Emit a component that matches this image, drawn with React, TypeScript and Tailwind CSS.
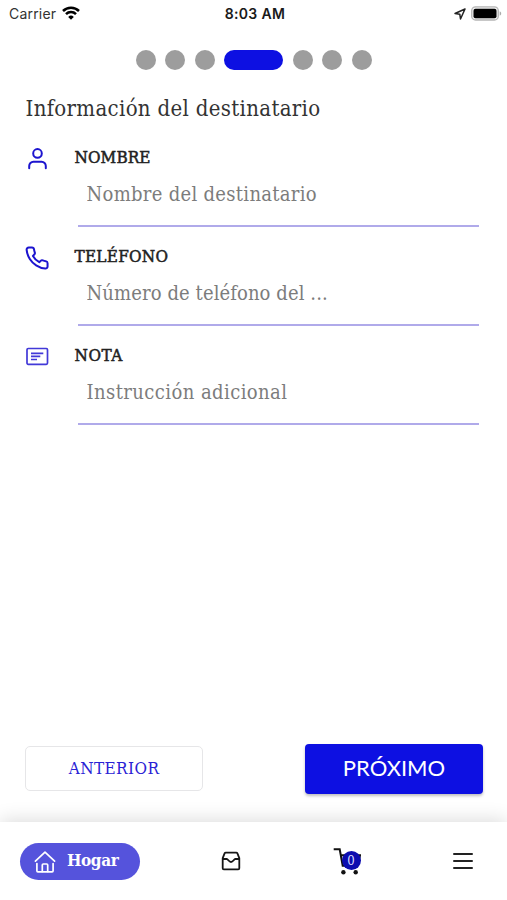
import type { ReactNode } from 'react';

type Field = {
  id: string;
  label: string;
  placeholder: string;
  labelClass: string;
  placeholderClass: string;
  icon: ReactNode;
};

const UserIcon = () => (
  <svg className="block h-6 w-6" viewBox="0 0 24 24" fill="none" stroke="#1c14cf" strokeWidth="2" strokeLinecap="round">
    <circle cx="12.5" cy="6.4" r="4.3" />
    <path d="M4.2 21.3v-2.4a4.2 4.2 0 0 1 4.2-4.2h8.2a4.2 4.2 0 0 1 4.2 4.2v2.4" />
  </svg>
);

const PhoneIcon = () => (
  <svg className="block h-6 w-6" viewBox="-.8 -.6 25 25" fill="none" stroke="#1c14cf" strokeWidth="2.1" strokeLinejoin="round">
    <path d="M22.7 17.4v3.3a2.2 2.2 0 0 1-2.4 2.2 21.8 21.8 0 0 1-9.5-3.4 21.5 21.5 0 0 1-6.6-6.6A21.8 21.8 0 0 1 .9 3.4 2.2 2.2 0 0 1 3.1 1h3.3a2.2 2.2 0 0 1 2.2 1.9c.14 1.05.4 2.08.77 3.07a2.2 2.2 0 0 1-.5 2.32l-1.4 1.4a17.6 17.6 0 0 0 6.6 6.6l1.4-1.4a2.2 2.2 0 0 1 2.32-.5c.99.37 2.02.63 3.07.77a2.2 2.2 0 0 1 1.84 2.24z" />
  </svg>
);

const NoteIcon = () => (
  <svg className="block h-6 w-6" viewBox="0 0 24 24" fill="none" stroke="#4239d8" strokeWidth="1.7">
    <rect x="2" y="3.5" width="20.5" height="15.8" rx="1.2" />
    <path d="M6 8.3h12.3M6 11.4h9.3M6 14.5h6" />
  </svg>
);

const HomeIcon = () => (
  <svg className="h-6 w-6" viewBox="0 0 24 24" fill="none" stroke="#fff" strokeWidth="1.7" strokeLinecap="round" strokeLinejoin="round">
    <path d="M2.4 12.2 12 3.2l9.6 9" />
    <path d="M3.9 14.5v7.3a1 1 0 0 0 1 1h14.2a1 1 0 0 0 1-1v-7.3" />
    <path d="M9.3 22.5V16a1 1 0 0 1 1-1h3.4a1 1 0 0 1 1 1v6.5" />
  </svg>
);

const InboxIcon = () => (
  <svg className="h-5 w-5" viewBox="0 0 20 20" fill="none" stroke="#161616" strokeWidth="1.8" strokeLinejoin="round">
    <path d="M1.7 7.2 3.6 2.4a1.3 1.3 0 0 1 1.2-.8h10.400a1.3 1.3 0 0 1 1.2.8l1.9 4.8v10a1.1 1.1 0 0 1-1.1 1.1H2.800a1.1 1.1 0 0 1-1.1-1.1z" />
    <path d="M1.7 8h4.100c1.300 0 2 3 4.200 3s2.900-3 4.200-3h4.100" />
  </svg>
);

const CartIcon = () => (
  <svg className="block h-7 w-7" viewBox="0 0 28 28" fill="none" stroke="#111" strokeWidth="2">
    <path d="M.7 2.300h6l3 16.500h14.600M7.500 8.300h19.500l-2.200 9" />
    <circle cx="10.400" cy="25.200" r="2.200" fill="#111" stroke="none" />
    <circle cx="22.700" cy="25.200" r="2.200" fill="#111" stroke="none" />
  </svg>
);

const fields: Field[] = [
  {
    id: 'nombre',
    label: 'NOMBRE',
    placeholder: 'Nombre del destinatario',
    labelClass: 'tracking-[0.1px]',
    placeholderClass: 'tracking-[0.3px]',
    icon: <UserIcon />,
  },
  {
    id: 'telefono',
    label: 'TELÉFONO',
    placeholder: 'Número de teléfono del ...',
    labelClass: 'tracking-[0.25px]',
    placeholderClass: 'tracking-[0.1px]',
    icon: <PhoneIcon />,
  },
  {
    id: 'nota',
    label: 'NOTA',
    placeholder: 'Instrucción adicional',
    labelClass: 'tracking-[0.5px]',
    placeholderClass: 'tracking-[0.42px]',
    icon: <NoteIcon />,
  },
];

const steps = [0, 1, 2, 3, 4, 5, 6];
const currentStep = 3;

function StatusBar() {
  return (
    <div className="grid h-[27px] grid-cols-3 items-center pr-[5px] pl-[9px] font-['Inter','Liberation_Sans',sans-serif]">
      <div className="flex items-center gap-[6px]">
        <span className="text-[14px] tracking-[0.2px] text-[#333]">Carrier</span>
        <svg className="mb-0.5 h-[14px] w-[18px]" viewBox="0 0 18 14" fill="none" stroke="#000" strokeWidth="2.5">
          <path d="M1 5a11.300 11.300 0 0 1 16 0" />
          <path d="M4 8.200a7 7 0 0 1 10 0" />
          <path d="M9 13.700 6.200 10.900a4 4 0 0 1 5.600 0z" fill="#000" stroke="none" />
        </svg>
      </div>
      <span className="pr-px text-center text-[14px] font-semibold tracking-[0.35px] whitespace-nowrap text-[#1a1a1a]">8:03 AM</span>
      <div className="flex items-center justify-end gap-[5px]">
        <svg className="h-3 w-3" viewBox="0 0 12 12" fill="none" stroke="#222" strokeWidth="1.5" strokeLinejoin="round">
          <path d="M11 1 1 5.500l4.800.7.700 4.800z" />
        </svg>
        <svg className="h-[15px] w-[31px]" viewBox="0 0 31 15">
          <rect x=".7" y=".8" width="26.600" height="13.200" rx="3.800" fill="#eee" stroke="#b5b5b5" strokeWidth="1.3" />
          <rect x="2.500" y="2.700" width="23" height="9.500" rx="2" fill="#000" />
          <path d="M28.700 5.200c2 .8 2 3.700 0 4.500z" fill="#aaa" />
        </svg>
      </div>
    </div>
  );
}

export default function App() {
  return (
    <div className="flex h-[900px] w-[507px] flex-col overflow-hidden bg-white font-['DejaVu_Serif_Condensed','DejaVu_Serif',serif]">
      <StatusBar />

      {/* Step indicator */}
      <div className="mt-[22.5px] flex h-5 items-center justify-center gap-[9.5px]">
        {steps.map((step) => (
          <span
            key={step}
            className={step === currentStep ? 'h-5 w-[59px] rounded-full bg-[#0d10e2]' : 'h-5 w-5 rounded-full bg-[#9d9d9d]'}
          />
        ))}
      </div>

      <main className="flex flex-1 flex-col pr-6 pl-[25px]">
        <h1 className="mt-[24.5px] h-[30px] pl-[0.5px] text-[22px] leading-[30px] tracking-[0.32px] whitespace-nowrap text-[#333]">
          Información del destinatario
        </h1>

        <form className="mt-[19px]">
          {fields.map((field) => (
            <div key={field.id} className="flex h-[99px]">
              <div className="w-[49.5px] pt-1">{field.icon}</div>
              <div className="flex-1">
                <label htmlFor={field.id} className={`block h-[30px] text-[17px] leading-[28px] text-[#222] [-webkit-text-stroke:0.5px_#222] ${field.labelClass}`}>
                  {field.label}
                </label>
                <div className="mr-1 ml-[3px] h-[54px] border-b-2 border-[#b0aaea]">
                  <input
                    id={field.id}
                    placeholder={field.placeholder}
                    className={`block h-[41px] w-full pl-[9px] text-[20px] outline-none placeholder:text-[#7c7c7c] ${field.placeholderClass}`}
                  />
                </div>
              </div>
            </div>
          ))}
        </form>

        <div className="mt-auto mb-[28px] flex items-center justify-between">
          <button className="mb-px h-[45px] w-[178px] rounded-[5px] border-[1.5px] border-[#e6e6e8] text-[17px] tracking-[0.4px] text-[#2a22d5]">
            ANTERIOR
          </button>
          <button className="h-[50px] w-[178px] rounded-[4px] bg-[#0d10e2] pb-1 font-['Lato',sans-serif] text-[22px] text-white shadow-[0_2px_3px_rgba(0,0,0,0.25)]">
            PRÓXIMO
          </button>
        </div>
      </main>

      <nav className="flex h-[78px] items-center bg-white pr-[34px] pl-5 shadow-[0_-2px_18px_rgba(0,0,0,0.14)]">
        <button className="flex h-[37px] w-[120px] items-center gap-[10px] rounded-full bg-[#5553dc] pl-[13px] text-white">
          <HomeIcon />
          <span className="text-[17px] font-bold tracking-[-0.4px]">Hogar</span>
        </button>
        <button className="ml-[80.5px]">
          <InboxIcon />
        </button>
        <button className="relative ml-[92.5px]">
          <CartIcon />
          <span className="absolute top-1 left-[8.5px] flex h-[19px] w-[19px] items-center justify-center rounded-full bg-[#0c0caf] text-[13px] text-[#dcdcff]">
            0
          </span>
        </button>
        <button className="ml-auto flex h-4 w-5 flex-col justify-between">
          <span className="h-0.5 w-full rounded-full bg-[#222]" />
          <span className="h-0.5 w-full rounded-full bg-[#222]" />
          <span className="h-0.5 w-full rounded-full bg-[#222]" />
        </button>
      </nav>
    </div>
  );
}
